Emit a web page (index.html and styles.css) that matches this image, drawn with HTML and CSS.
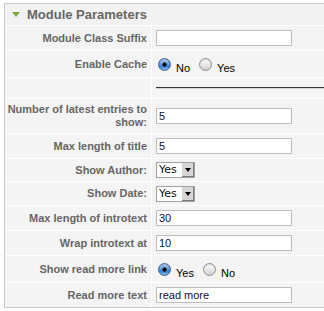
FILE: index.html
```html
<!DOCTYPE html>
<html lang="en">
<head>
<meta charset="utf-8">
<title>Module Parameters</title>
<link rel="stylesheet" href="styles.css">
</head>
<body>
<div class="panel">
  <div class="panel-head">
    <span class="toggle"></span>
    <span class="title">Module Parameters</span>
  </div>
  <div class="params">
    <div class="row r-text">
      <label class="key">Module Class Suffix</label>
      <div class="val"><input class="text" type="text" value=""></div>
    </div>
    <div class="row r-radio">
      <span class="key">Enable Cache</span>
      <div class="val radios">
        <label class="opt"><input type="radio" name="cache" checked><span class="opt-text">No</span></label>
        <label class="opt"><input type="radio" name="cache"><span class="opt-text">Yes</span></label>
      </div>
    </div>
    <div class="row r-sep">
      <span class="key"></span>
      <div class="val"><hr class="rule"></div>
    </div>
    <div class="row r-tall">
      <label class="key">Number of latest entries to show:</label>
      <div class="val"><input class="text" type="text" value="5"></div>
    </div>
    <div class="row r-text">
      <label class="key">Max length of title</label>
      <div class="val"><input class="text" type="text" value="5"></div>
    </div>
    <div class="row r-select">
      <label class="key">Show Author:</label>
      <div class="val"><div class="select"><span class="select-value">Yes</span><span class="select-btn"><span class="arrow"></span></span></div></div>
    </div>
    <div class="row r-select2">
      <label class="key">Show Date:</label>
      <div class="val"><div class="select"><span class="select-value">Yes</span><span class="select-btn"><span class="arrow"></span></span></div></div>
    </div>
    <div class="row r-text">
      <label class="key">Max length of introtext</label>
      <div class="val"><input class="text" type="text" value="30"></div>
    </div>
    <div class="row r-text">
      <label class="key">Wrap introtext at</label>
      <div class="val"><input class="text" type="text" value="10"></div>
    </div>
    <div class="row r-radio">
      <span class="key">Show read more link</span>
      <div class="val radios">
        <label class="opt"><input type="radio" name="more" checked><span class="opt-text">Yes</span></label>
        <label class="opt"><input type="radio" name="more"><span class="opt-text">No</span></label>
      </div>
    </div>
    <div class="row r-text">
      <label class="key">Read more text</label>
      <div class="val"><input class="text" type="text" value="read more"></div>
    </div>
  </div>
</div>
</body>
</html>
```
FILE: styles.css
```css
html, body {
  margin: 0;
  padding: 0;
  background: #fff;
  overflow: hidden;
}

.panel {
  margin: 3px 0 0 4px;
  width: 320px;
  border: 1px solid #c9c9c9;
  border-right: 0;
  background: #f4f4f4;
  font-family: "Liberation Sans", Arial, sans-serif;
}

.panel-head {
  height: 21px;
  display: flex;
  align-items: center;
  background: #f2f2f2;
  border-bottom: 1px solid #fff;
}

.toggle {
  width: 0;
  height: 0;
  border-left: 4px solid transparent;
  border-right: 4px solid transparent;
  border-top: 5px solid #79a83c;
  margin: 0 7px 0 7px;
}

.title {
  font-size: 13px;
  font-weight: bold;
  color: #666;
  line-height: 16px;
}

.row {
  display: grid;
  grid-template-columns: 147px 1fr;
  border-bottom: 1px solid #fff;
}

.row:last-child {
  border-bottom: 0;
}

.r-text { height: 24px; }
.r-radio { height: 26px; }
.r-sep { height: 20px; }
.r-tall { height: 34px; }
.r-select { height: 22px; }
.r-select2 { height: 23px; }

.key {
  display: flex;
  align-items: center;
  justify-content: flex-end;
  text-align: right;
  padding: 0 4px 0 0;
  border-right: 1px solid #fff;
  font-size: 11px;
  font-weight: bold;
  color: #666;
  line-height: 13px;
}

.val {
  display: flex;
  align-items: center;
  padding-left: 4px;
  min-width: 0;
}

.text {
  box-sizing: border-box;
  width: 136px;
  height: 16px;
  margin: 0;
  padding: 0 2px;
  border: 1px solid #bdbdbd;
  background: #fff;
  font-family: "Liberation Sans", Arial, sans-serif;
  font-size: 11px;
  color: #10103a;
  outline: none;
}

.radios {
  padding-left: 6px;
}

.opt {
  display: flex;
  align-items: center;
  margin-right: 9px;
}

.opt input {
  appearance: none;
  -webkit-appearance: none;
  box-sizing: border-box;
  width: 13px;
  height: 13px;
  margin: 0;
  border-radius: 50%;
  border: 1px solid #8e8e8e;
  background: linear-gradient(#ffffff, #e6e6e6 55%, #cfcfcf);
  box-shadow: inset 0 1px 1px rgba(0, 0, 0, 0.15);
}

.opt input:checked {
  border-color: #3e628f;
  background:
    radial-gradient(circle, #000 0 1.8px, transparent 2.4px),
    linear-gradient(#b7d6f6, #5a97df 50%, #3a7dd2 70%, #8cc0f2);
}

.opt-text {
  margin-left: 5px;
  padding-top: 7px;
  font-size: 11px;
  color: #000;
}

.rule {
  flex: 1;
  height: 0;
  margin: 0;
  border: 0;
  border-top: 1px solid #333;
  border-bottom: 1px solid #d2d2d2;
}

.select {
  box-sizing: border-box;
  display: flex;
  height: 16px;
  width: 39px;
  border: 1px solid #a0a0a0;
  background: #fff;
}

.select-value {
  flex: 1;
  padding-left: 2px;
  font-family: "DejaVu Sans", sans-serif;
  font-size: 11px;
  line-height: 14px;
  color: #111;
}

.select-btn {
  width: 12px;
  display: flex;
  align-items: center;
  justify-content: center;
  background: #d6d6d6;
  border-left: 1px solid #fff;
  box-shadow: inset -1px -1px 0 #7d7d7d;
}

.arrow {
  width: 0;
  height: 0;
  border-left: 3px solid transparent;
  border-right: 3px solid transparent;
  border-top: 4px solid #000;
}
```
